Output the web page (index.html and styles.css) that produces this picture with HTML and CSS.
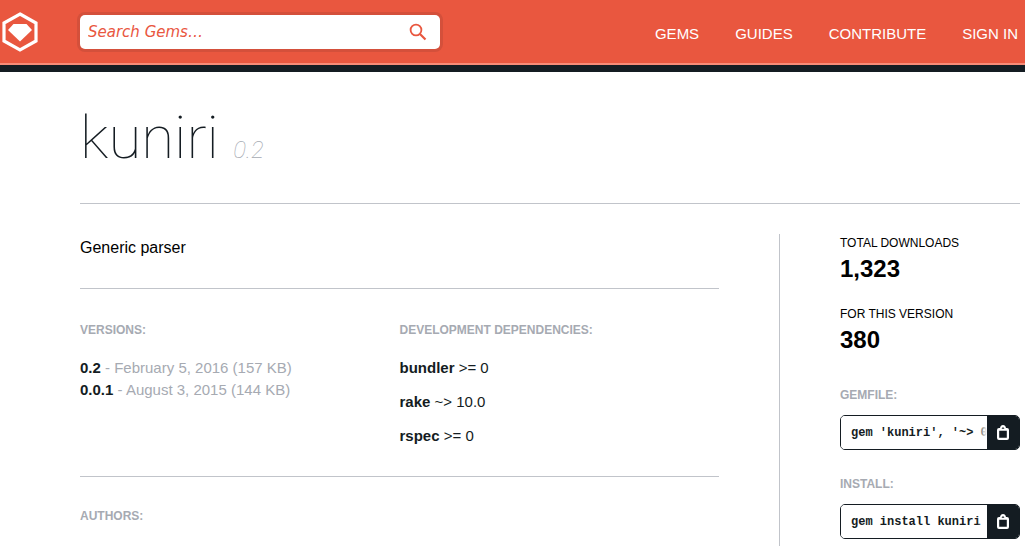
FILE: index.html
```html
<!DOCTYPE html>
<html lang="en">
<head>
<meta charset="utf-8">
<title>kuniri | RubyGems.org</title>
<link rel="stylesheet" href="styles.css">
</head>
<body>
<header class="header">
  <a class="logo" href="#" aria-label="RubyGems">
    <svg width="36" height="40" viewBox="0 0 36 40"><path d="M18 2 34 11v18L18 38 2 29V11z" fill="none" stroke="#fff" stroke-width="3.2"/><path d="M11.500 12h13l5.500 6-12 11.500L6 18z" fill="#fff"/></svg>
  </a>
  <form class="search" role="search">
    <input class="search-input" type="search" placeholder="Search Gems…" aria-label="Search Gems">
    <button class="search-button" type="submit" aria-label="Search">
      <svg width="18" height="18" viewBox="0 0 18 18" fill="none" stroke="#e9573f"><circle cx="7" cy="7" r="5.400" stroke-width="1.800"/><path d="m11 11 5.500 5.500" stroke-width="2.200"/></svg>
    </button>
  </form>
  <nav class="nav">
    <a href="#">Gems</a>
    <a href="#">Guides</a>
    <a href="#">Contribute</a>
    <a href="#">Sign in</a>
  </nav>
</header>
<main class="page">
  <h1 class="title">kuniri <i class="title-version">0.2</i></h1>
  <div class="columns">
    <div class="content">
      <p class="description">Generic parser</p>
      <div class="details">
        <section>
          <h2 class="label">Versions:</h2>
          <ol class="versions">
            <li><a href="#">0.2</a> - February 5, 2016 (157 KB)</li>
            <li><a href="#">0.0.1</a> - August 3, 2015 (144 KB)</li>
          </ol>
        </section>
        <section>
          <h2 class="label">Development Dependencies:</h2>
          <ul class="dependencies">
            <li><a href="#"><strong>bundler</strong> &gt;= 0</a></li>
            <li><a href="#"><strong>rake</strong> ~&gt; 10.0</a></li>
            <li><a href="#"><strong>rspec</strong> &gt;= 0</a></li>
          </ul>
        </section>
      </div>
      <section class="authors">
        <h2 class="label">Authors:</h2>
      </section>
    </div>
    <aside class="sidebar">
      <h2 class="stat">Total downloads <span>1,323</span></h2>
      <h2 class="stat">For this version <span>380</span></h2>
      <div class="snippet">
        <label class="label" for="gemfile">Gemfile:</label>
        <div class="code">
          <div class="code-field"><input id="gemfile" type="text" readonly value="gem 'kuniri', '~&gt; 0.2'"></div>
          <button type="button" aria-label="Copy Gemfile line"><svg width="12" height="15" viewBox="0 0 12 15"><path d="M3 3Q3.500 0 6 0T9 3h1q2 0 2 2v8q0 2-2 2H2q-2 0-2-2V5q0-2 2-2zM2.200 5.800v7h7.600v-7zM4.500 3.800h3L6 2z" fill="#fff" fill-rule="evenodd"/></svg></button>
        </div>
      </div>
      <div class="snippet">
        <label class="label" for="install">install:</label>
        <div class="code">
          <div class="code-field"><input id="install" type="text" readonly value="gem install kuniri"></div>
          <button type="button" aria-label="Copy install command"><svg width="12" height="15" viewBox="0 0 12 15"><path d="M3 3Q3.500 0 6 0T9 3h1q2 0 2 2v8q0 2-2 2H2q-2 0-2-2V5q0-2 2-2zM2.200 5.800v7h7.600v-7zM4.500 3.800h3L6 2z" fill="#fff" fill-rule="evenodd"/></svg></button>
        </div>
      </div>
    </aside>
  </div>
</main>
</body>
</html>
```
FILE: styles.css
```css
* { box-sizing: border-box; }
body {
  margin: 0;
  background: #fff;
  color: #141c22;
  font-family: "Liberation Sans", Arial, sans-serif;
  font-size: 15px;
}
a { color: inherit; text-decoration: none; }
h1, h2, p, ol, ul { margin: 0; padding: 0; font-weight: normal; }
ol, ul { list-style: none; }
svg { display: block; }

.header {
  display: flex;
  align-items: center;
  height: 72px;
  padding: 0 7px 2px 2px;
  background: #e9573f;
  border-bottom: 7px solid #141c22;
  box-shadow: inset 0 -2px #f78b77;
}
.logo { width: 78px; }
.search {
  display: flex;
  width: 360px;
  height: 34px;
  background: #fff;
  border-radius: 5px;
  box-shadow: 0 0 0 3px #d4503b;
}
.search-input {
  flex: 1;
  min-width: 0;
  padding: 0 8px;
  border: 0;
  background: none;
  color: #e9573f;
  font: italic 15px "DejaVu Sans", sans-serif;
  outline: 0;
}
.search-input::placeholder { color: #e9573f; opacity: 1; }
.search-button {
  padding: 0 13px;
  border: 0;
  background: none;
}
.nav {
  display: flex;
  gap: 36px;
  margin-left: auto;
  padding-top: 3px;
  color: #fff;
  text-transform: uppercase;
  white-space: nowrap;
}

.page { padding: 0 5px 0 80px; }
.title {
  padding: 31px 0 18px;
  border-bottom: 1px solid #c1c4ca;
  font: 100 60px/70px Roboto, sans-serif;
}
.title-version { color: #a6aab2; font-size: 24px; }
.columns { display: flex; padding-top: 30px; }
.content { flex: 1; padding-right: 60px; }
.description {
  padding-bottom: 27px;
  border-bottom: 1px solid #c1c4ca;
  color: #000;
  font-size: 16px;
  line-height: 27px;
}
.details {
  display: grid;
  grid-template-columns: 1fr 1fr;
  padding: 32px 0 17px;
  border-bottom: 1px solid #c1c4ca;
}
.label {
  display: block;
  color: #a6aab2;
  font-size: 12px;
  font-weight: bold;
  line-height: 18px;
  text-transform: uppercase;
}
.versions { padding-top: 18px; color: #a6aab2; line-height: 22px; }
.versions a { color: #141c22; font-weight: bold; }
.dependencies { padding-top: 18px; line-height: 22px; }
.dependencies li { padding-bottom: 12px; }
.authors { padding-top: 30px; }

.sidebar {
  width: 241px;
  padding-left: 60px;
  border-left: 1px solid #c1c4ca;
}
.stat {
  padding-bottom: 20px;
  color: #000;
  font-size: 12px;
  line-height: 18px;
  text-transform: uppercase;
}
.stat span { display: block; font-size: 24px; font-weight: bold; line-height: 33px; }
.snippet { padding: 10px 0 15px; }
.snippet:last-child { padding-bottom: 7px; }
.code {
  display: flex;
  height: 35px;
  margin-top: 11px;
  border: 1px solid #141c22;
  border-radius: 5px;
  overflow: hidden;
}
.code-field { position: relative; flex: 1; min-width: 0; }
.code-field::after {
  content: "";
  position: absolute;
  inset: 0 0 0 auto;
  width: 10px;
  background: linear-gradient(to right, transparent, #fff);
  pointer-events: none;
}
.code input {
  width: 100%;
  height: 100%;
  padding: 0 0 0 10px;
  border: 0;
  color: #141c22;
  font: bold 12px Courier, "Courier New", "Liberation Mono", monospace;
  outline: 0;
}
.code button {
  display: grid;
  place-items: center;
  width: 32px;
  padding: 0;
  border: 0;
  background: #141c22;
}
```
